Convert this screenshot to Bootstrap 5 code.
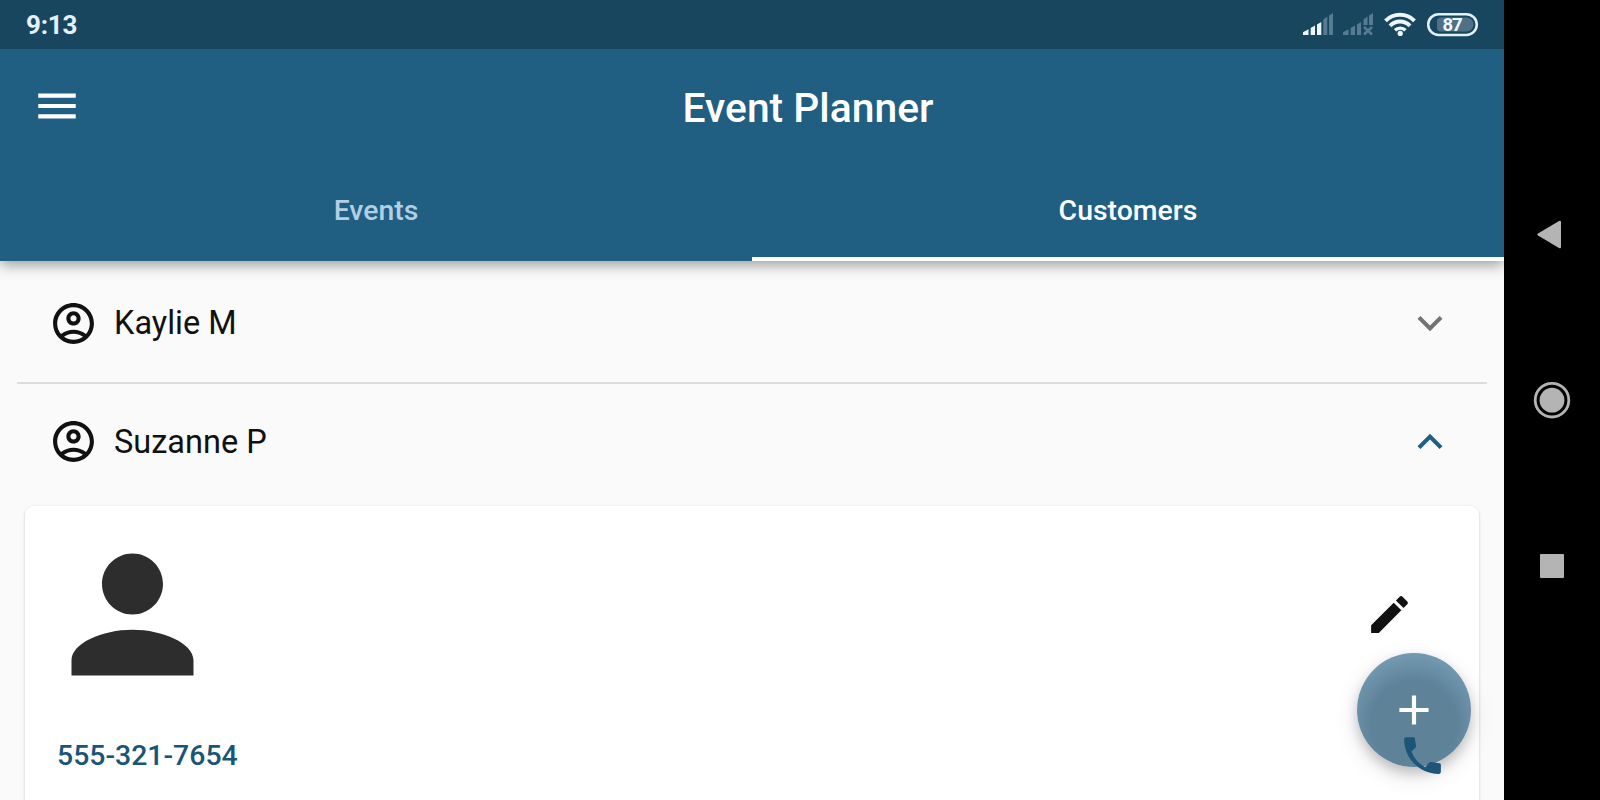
<!DOCTYPE html>
<html lang="en">
<head>
    <meta charset="utf-8">
    <title>Event Planner</title>
    <link href="https://cdn.jsdelivr.net/npm/bootstrap@5.3.0/dist/css/bootstrap.min.css" rel="stylesheet">
    <style>
        body { font-family: Roboto, "Liberation Sans", sans-serif; background: #000; color: #111; }
        svg { display: block; flex-shrink: 0; }
        .icon-md { width: 50px; height: 50px; fill: currentColor; }
        .screen { width: 1504px; background: #fafafa; }
        .top-area { background: #205e82; color: #fff; box-shadow: 0 4px 13px rgba(0, 0, 0, .38); z-index: 2; }
        .status-bar { height: 49px; padding: 0 25px 0 26px; background: #18465f; color: #e3f1fb; }
        .clock { font-size: 26px; font-weight: 700; line-height: 49px; padding-top: 2px; letter-spacing: -.2px; }
        .app-bar { height: 117px; padding: 0 32px 3px; }
        .app-title { font-size: 40.8px; font-weight: 500; line-height: 50px; padding: 3px 0 0 62px; }
        .tab-row { height: 95px; }
        .tab-btn { color: #b3cfe2; font-size: 28.4px; font-weight: 500; line-height: 89px; text-decoration: none; border-bottom: 4px solid transparent; }
        .tab-btn.active { color: #fff; border-color: #fff; }
        .customer-row { height: 118px; padding: 0 49px; font-size: 32.5px; line-height: 50px; }
        .expanded-row { height: 115px; }
        .person-icon { width: 49px; height: 49px; }
        .customer-list { padding: 3px 0 0; }
        .customer-divider { height: 2px; margin: 0 17px; background: #dcdcdc; }
        .detail { margin: 7px 25px 0; height: 310px; background: #fff; border-radius: 9px 9px 0 0; box-shadow: 0 1px 3px rgba(0, 0, 0, .2); padding: 17px 16px 0; }
        .avatar { width: 183px; height: 183px; fill: #2d2d2d; }
        .phone-line { height: 50px; margin-top: 25px; padding: 0 16px; color: #185577; font-size: 28.4px; font-weight: 500; }
        .edit-icon { width: 49px; height: 49px; margin: 67px 49px 0 0; }
        .fab { position: absolute; left: 1357px; top: 653px; width: 114px; height: 114px; border: 0; border-radius: 50%; color: #fff; z-index: 1;
            background: radial-gradient(circle at 50% 62%, #5e8298 0, #5e8298 47%, #7198b0 74%);
            box-shadow: 0 6px 12px rgba(0, 0, 0, .18), 0 8px 24px rgba(0, 0, 0, .12); }
        .call-icon { position: relative; z-index: 2; width: 49px; height: 49px; margin-bottom: 2px; color: #1c5577; }
        .nav-strip { width: 96px; color: #b4b4b4; }
        .nav-strip svg { fill: currentColor; }
    </style>
</head>
<body class="vh-100 overflow-hidden">
    <div class="d-flex vh-100">
        <div class="screen position-relative d-flex flex-column overflow-hidden">
            <header class="top-area position-relative">
                <!-- Status bar -->
                <div class="status-bar d-flex justify-content-between align-items-center">
                    <div class="clock">9:13</div>
                    <svg width="178" height="26" viewBox="1301 12 178 26">
                        <g fill="#eef7ff">
                            <path d="M1303 32.3l5.5-3V35h-5.5zM1310.700 28l4.300-2.500V35h-4.300zM1317 24.500l4.300-2.500V35h-4.300z"/>
                        </g>
                        <g fill="#577b92">
                            <path d="M1323.300 19.500l4-3V35h-4zM1329 15.500l4-2.500v22h-4z"/>
                            <path d="M1343 32.300l5.500-3V35h-5.500zM1350.700 28l4.300-2.500V35h-4.300zM1357 24.500l4-2.500V35h-4zM1363.500 19.500l4-3V25h-4zM1369 15.500l4-2.500v12h-4z"/>
                            <path d="M1364 27l8 7.500M1372 27l-8 7.500" stroke="#577b92" stroke-width="2.600"/>
                        </g>
                        <g fill="none" stroke="#eef7ff" stroke-width="4">
                            <path d="M1385.500 20.800a20.500 20.500 0 0 1 29 0"/>
                            <path d="M1390 25.800a14 14 0 0 1 20 0"/>
                            <path d="M1395 30.300a7.500 7.500 0 0 1 10.500 0" stroke-width="3.400"/>
                        </g>
                        <circle cx="1400.200" cy="33.400" r="2.600" fill="#eef7ff"/>
                        <rect x="1428.200" y="14.200" width="48.600" height="20.800" rx="10.400" fill="none" stroke="#e3f1fb" stroke-width="2.500"/>
                        <path d="M1441 17.500h25.500a7 7 0 0 1 0 14H1441a4 4 0 0 1-4-4v-6a4 4 0 0 1 4-4z" fill="#4e7188"/>
                        <text x="1452" y="31.200" text-anchor="middle" font-size="18.500" font-weight="700" letter-spacing="-1" fill="#f2f9ff">87</text>
                    </svg>
                </div>
                <!-- App bar -->
                <div class="app-bar d-flex align-items-center">
                    <svg class="icon-md" viewBox="0 0 24 24"><path d="M3 18h18v-2H3v2zm0-5h18v-2H3v2zm0-7v2h18V6H3z"/></svg>
                    <div class="app-title flex-grow-1 text-center">Event Planner</div>
                </div>
                <nav class="tab-row d-flex">
                    <a class="tab-btn w-50 text-center" href="#">Events</a>
                    <a class="tab-btn w-50 text-center active" href="#">Customers</a>
                </nav>
            </header>

            <!-- Customer list -->
            <main class="customer-list">
                <div class="customer-row d-flex align-items-center">
                    <svg class="icon-md person-icon" viewBox="0 0 24 24"><path d="M12 2C6.480 2 2 6.480 2 12s4.480 10 10 10 10-4.480 10-10S17.520 2 12 2zM7.350 18.500C8.660 17.560 10.260 17 12 17s3.340.560 4.650 1.500c-1.310.940-2.910 1.500-4.650 1.500s-3.340-.560-4.650-1.500zm10.790-1.380C16.450 15.800 14.320 15 12 15s-4.450.800-6.140 2.120C4.700 15.730 4 13.950 4 12c0-4.420 3.580-8 8-8s8 3.580 8 8c0 1.950-.700 3.730-1.860 5.120zM12 6c-1.930 0-3.500 1.570-3.500 3.500S10.070 13 12 13s3.500-1.570 3.500-3.500S13.930 6 12 6zm0 5c-.830 0-1.500-.670-1.500-1.500S11.170 8 12 8s1.500.670 1.500 1.500S12.830 11 12 11z"/></svg>
                    <span class="ps-3 flex-grow-1">Kaylie M</span>
                    <svg class="icon-md" viewBox="0 0 24 24" color="#737373"><path d="M16.590 8.590L12 13.170 7.410 8.590 6 10l6 6 6-6z"/></svg>
                </div>
                <div class="customer-divider"></div>
                <div class="customer-row expanded-row d-flex align-items-center">
                    <svg class="icon-md person-icon" viewBox="0 0 24 24"><path d="M12 2C6.480 2 2 6.480 2 12s4.480 10 10 10 10-4.480 10-10S17.520 2 12 2zM7.350 18.500C8.660 17.560 10.260 17 12 17s3.340.560 4.650 1.500c-1.310.940-2.910 1.500-4.650 1.500s-3.340-.560-4.650-1.500zm10.790-1.380C16.450 15.800 14.320 15 12 15s-4.450.800-6.140 2.120C4.700 15.730 4 13.950 4 12c0-4.420 3.580-8 8-8s8 3.580 8 8c0 1.950-.700 3.730-1.860 5.120zM12 6c-1.930 0-3.500 1.570-3.500 3.500S10.070 13 12 13s3.500-1.570 3.500-3.500S13.930 6 12 6zm0 5c-.830 0-1.500-.670-1.500-1.500S11.170 8 12 8s1.500.670 1.500 1.500S12.830 11 12 11z"/></svg>
                    <span class="ps-3 flex-grow-1">Suzanne P</span>
                    <svg class="icon-md" viewBox="0 0 24 24" color="#205e82"><path d="M12 8l-6 6 1.410 1.410L12 10.830l4.590 4.580L18 14z"/></svg>
                </div>
                <section class="detail">
                    <div class="d-flex justify-content-between">
                        <svg class="avatar" viewBox="0 0 24 24"><path d="M12 12c2.210 0 4-1.790 4-4s-1.790-4-4-4-4 1.790-4 4 1.790 4 4 4zm0 2c-4 0-8 1.790-8 4v2h16v-2c0-2.210-4-4-8-4z"/></svg>
                        <svg class="icon-md edit-icon" viewBox="0 0 24 24"><path d="M3 17.250V21h3.750L17.810 9.940l-3.750-3.750L3 17.250zM20.710 7.040c.390-.390.390-1.020 0-1.410l-2.340-2.340c-.390-.390-1.020-.390-1.410 0l-1.830 1.830 3.750 3.750 1.830-1.830z"/></svg>
                    </div>
                    <div class="phone-line d-flex justify-content-between align-items-center">
                        <span>555-321-7654</span>
                        <svg class="icon-md call-icon" viewBox="0 0 24 24"><path d="M20.300 15.800l-4.400-.600c-.300 0-.500.100-.700.300l-1.900 2.200c-3.100-1.600-5.400-4.200-6.700-7.700l2-1.900c.200-.200.300-.500.200-.800L8.300 3.800c0-.500-.400-.800-.900-.800H4c-.550 0-1 .450-1 1 0 9.390 7.610 17 17 17 .550 0 1-.450 1-1v-3.400c0-.500-.300-.800-.700-.800z"/></svg>
                    </div>
                </section>
            </main>

            <button class="fab d-flex align-items-center justify-content-center p-0">
                <svg class="icon-md" viewBox="0 0 24 24"><path d="M19 13h-6v6h-2v-6H5v-2h6V5h2v6h6v2z"/></svg>
            </button>
        </div>

        <!-- System navigation -->
        <div class="nav-strip d-flex flex-column align-items-center justify-content-center">
            <svg width="96" height="380" viewBox="1504 210 96 380">
                <path d="M1538 233.500l21-12.500q2-1 2 1v25q0 2-2 1l-21-12.500q-1.500-1 0-2z"/>
                <circle cx="1552" cy="400.200" r="16.800" fill="none" stroke="currentColor" stroke-width="2.800"/>
                <circle cx="1552" cy="400.200" r="12.400"/>
                <rect x="1540" y="554" width="24" height="24" rx="1"/>
            </svg>
        </div>
    </div>
    <script src="https://cdn.jsdelivr.net/npm/bootstrap@5.3.0/dist/js/bootstrap.bundle.min.js"></script>
</body>
</html>
